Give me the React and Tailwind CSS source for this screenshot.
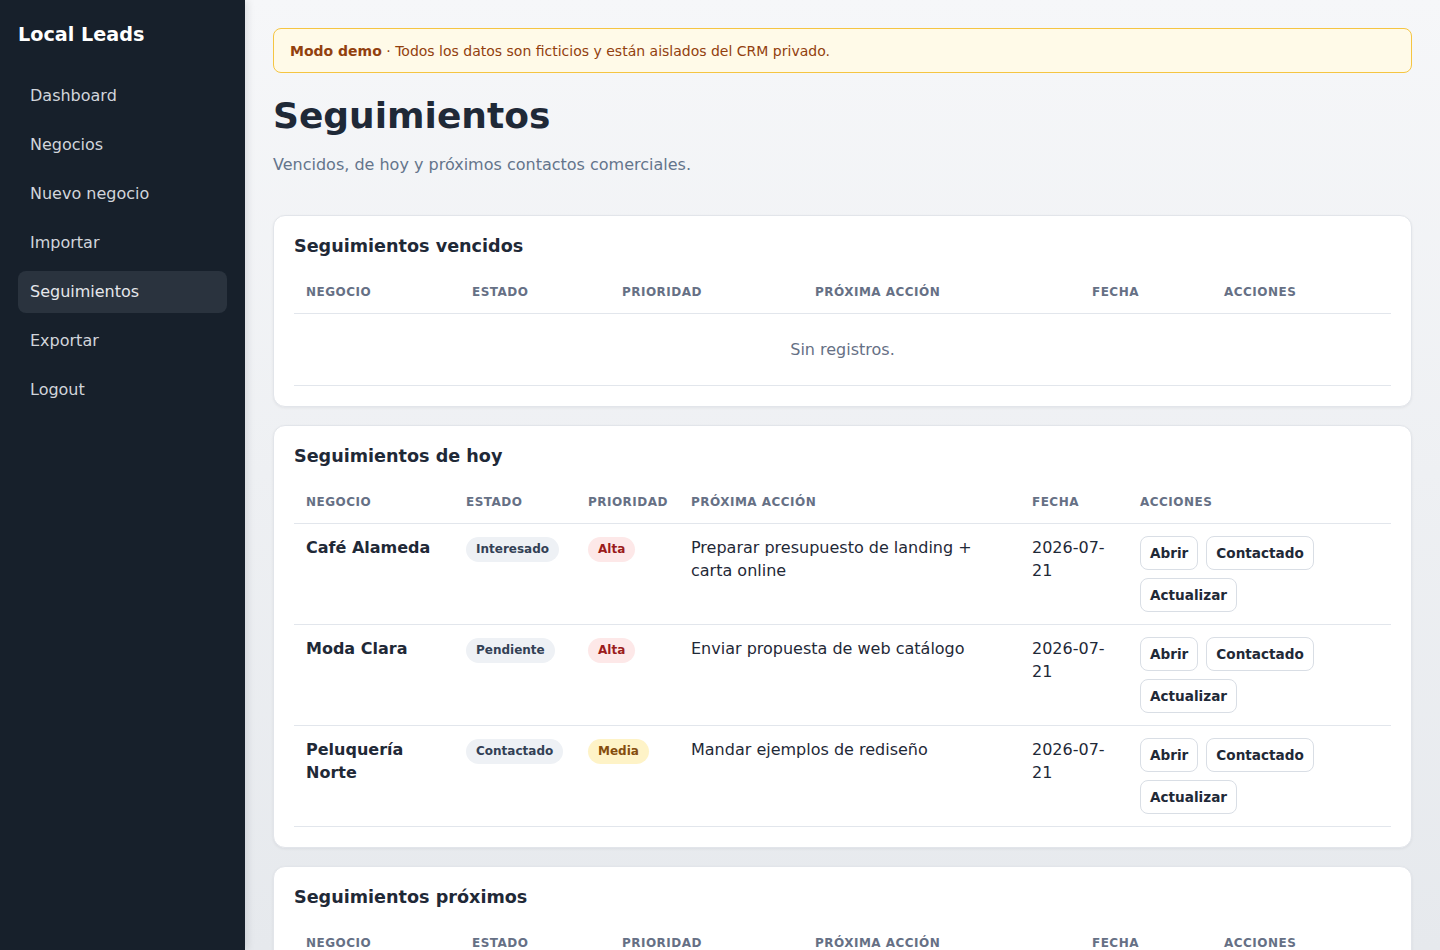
import React from "react";

const nav = ["Dashboard", "Negocios", "Nuevo negocio", "Importar", "Seguimientos", "Exportar", "Logout"];

const emptyCols = ["w-[166px]", "w-[150px]", "w-[193px]", "w-[277px]", "w-[132px]", "w-[179px]"];
const fullCols = ["w-[160px]", "w-[122px]", "w-[103px]", "w-[341px]", "w-[108px]", "w-[263px]"];
const headers = ["Negocio", "Estado", "Prioridad", "Próxima acción", "Fecha", "Acciones"];

const rows = [
  { name: "Café Alameda", estado: "Interesado", prio: "Alta", accion: "Preparar presupuesto de landing + carta online", fecha: "2026-07-21" },
  { name: "Moda Clara", estado: "Pendiente", prio: "Alta", accion: "Enviar propuesta de web catálogo", fecha: "2026-07-21" },
  { name: "Peluquería Norte", estado: "Contactado", prio: "Media", accion: "Mandar ejemplos de rediseño", fecha: "2026-07-21" },
];

function Head({ cols }) {
  return (
    <>
      <colgroup>
        {cols.map((c, i) => (
          <col key={i} className={c} />
        ))}
      </colgroup>
      <thead>
        <tr>
          {headers.map((h) => (
            <th
              key={h}
              className="px-3 pt-[13px] pb-[11px] text-left text-[12px] leading-[19px] font-bold uppercase tracking-[0.04em] text-[#667085] border-b border-[#e2e6ec]"
            >
              {h}
            </th>
          ))}
        </tr>
      </thead>
    </>
  );
}

function CardTitle({ children }) {
  return <h2 className="pt-px text-[17.6px] leading-[18px] font-bold text-[#1f2937] mb-[15px]">{children}</h2>;
}

function EmptyCard({ title }) {
  return (
    <section className="bg-white border border-[#e2e5ea] rounded-xl shadow-[0_1px_3px_rgba(15,23,42,0.06)] p-5">
      <CardTitle>{title}</CardTitle>
      <table className="w-full table-fixed border-collapse">
        <Head cols={emptyCols} />
        <tbody>
          <tr>
            <td colSpan={6} className="py-6 leading-[23px] text-center text-[16px] text-[#667085] border-b border-[#e2e6ec]">
              Sin registros.
            </td>
          </tr>
        </tbody>
      </table>
    </section>
  );
}

function Badge({ kind, children }) {
  const cls =
    kind === "alta"
      ? "bg-[#fde8e8] text-[#9b1c1c]"
      : kind === "media"
      ? "bg-[#fef3c7] text-[#854d0e]"
      : "bg-[#eef1f5] text-[#334155]";
  return (
    <span className={`inline-block rounded-full px-[10px] py-1 text-[12px] leading-[17px] font-bold ${cls}`}>
      {children}
    </span>
  );
}

function Btn({ children }) {
  return (
    <button className="bg-white border border-[#d9dee5] rounded-lg px-[9px] py-[7px] text-[13.6px] leading-[18px] font-bold text-[#1f2937]">
      {children}
    </button>
  );
}

export default function App() {
  return (
    <div className="flex h-screen overflow-hidden font-['DejaVu_Sans',sans-serif]">
      <aside className="w-[245px] shrink-0 bg-[#17202b] px-[18px] pt-6 shadow-[2px_0_8px_rgba(15,23,42,0.12)] z-10">
        <div className="text-[19.2px] leading-[22px] font-bold text-white mb-[29px]">Local Leads</div>
        <nav className="flex flex-col gap-[7px]">
          {nav.map((n) => (
            <div
              key={n}
              className={`rounded-lg px-3 py-[9px] text-[16px] leading-6 ${
                n === "Seguimientos" ? "bg-[#2a333e] text-[#e5e7eb]" : "text-[#d1d5db]"
              }`}
            >
              {n}
            </div>
          ))}
        </nav>
      </aside>
      <main className="flex-1 overflow-hidden bg-linear-to-b from-[#f6f7f9] to-[#e6e9ed] px-7 pt-7">
        <div className="border border-[#f5c542] bg-[#fffae8] rounded-lg px-4 pt-3 pb-[11px] text-[14px] leading-5 text-[#92400e]">
          <span className="font-bold">Modo demo</span> · Todos los datos son ficticios y están aislados del CRM privado.
        </div>
        <h1 className="mt-[21px] text-[36px] leading-[44px] font-bold text-[#1f2937]">Seguimientos</h1>
        <p className="mt-[15px] text-[16px] leading-6 text-[#64748b]">Vencidos, de hoy y próximos contactos comerciales.</p>

        <div className="mt-[38px] flex flex-col gap-[18px]">
          <EmptyCard title="Seguimientos vencidos" />

          <section className="bg-white border border-[#e2e5ea] rounded-xl shadow-[0_1px_3px_rgba(15,23,42,0.06)] p-5">
            <CardTitle>Seguimientos de hoy</CardTitle>
            <table className="w-full table-fixed border-collapse">
              <Head cols={fullCols} />
              <tbody>
                {rows.map((r) => (
                  <tr key={r.name} className="align-top">
                    <td className="px-3 py-3 text-[16px] leading-[23px] font-bold text-[#1f2937] border-b border-[#e2e6ec]">{r.name}</td>
                    <td className="px-3 py-3 border-b border-[#e2e6ec]">
                      <Badge kind="gray">{r.estado}</Badge>
                    </td>
                    <td className="px-3 py-3 border-b border-[#e2e6ec]">
                      <Badge kind={r.prio === "Alta" ? "alta" : "media"}>{r.prio}</Badge>
                    </td>
                    <td className="px-3 py-3 text-[16px] leading-[23px] text-[#1f2937] border-b border-[#e2e6ec]">{r.accion}</td>
                    <td className="px-3 py-3 text-[16px] leading-[23px] text-[#1f2937] border-b border-[#e2e6ec]">{r.fecha}</td>
                    <td className="px-3 py-3 border-b border-[#e2e6ec]">
                      <div className="flex flex-wrap gap-2">
                        <Btn>Abrir</Btn>
                        <Btn>Contactado</Btn>
                        <Btn>Actualizar</Btn>
                      </div>
                    </td>
                  </tr>
                ))}
              </tbody>
            </table>
          </section>

          <EmptyCard title="Seguimientos próximos" />
        </div>
      </main>
    </div>
  );
}
